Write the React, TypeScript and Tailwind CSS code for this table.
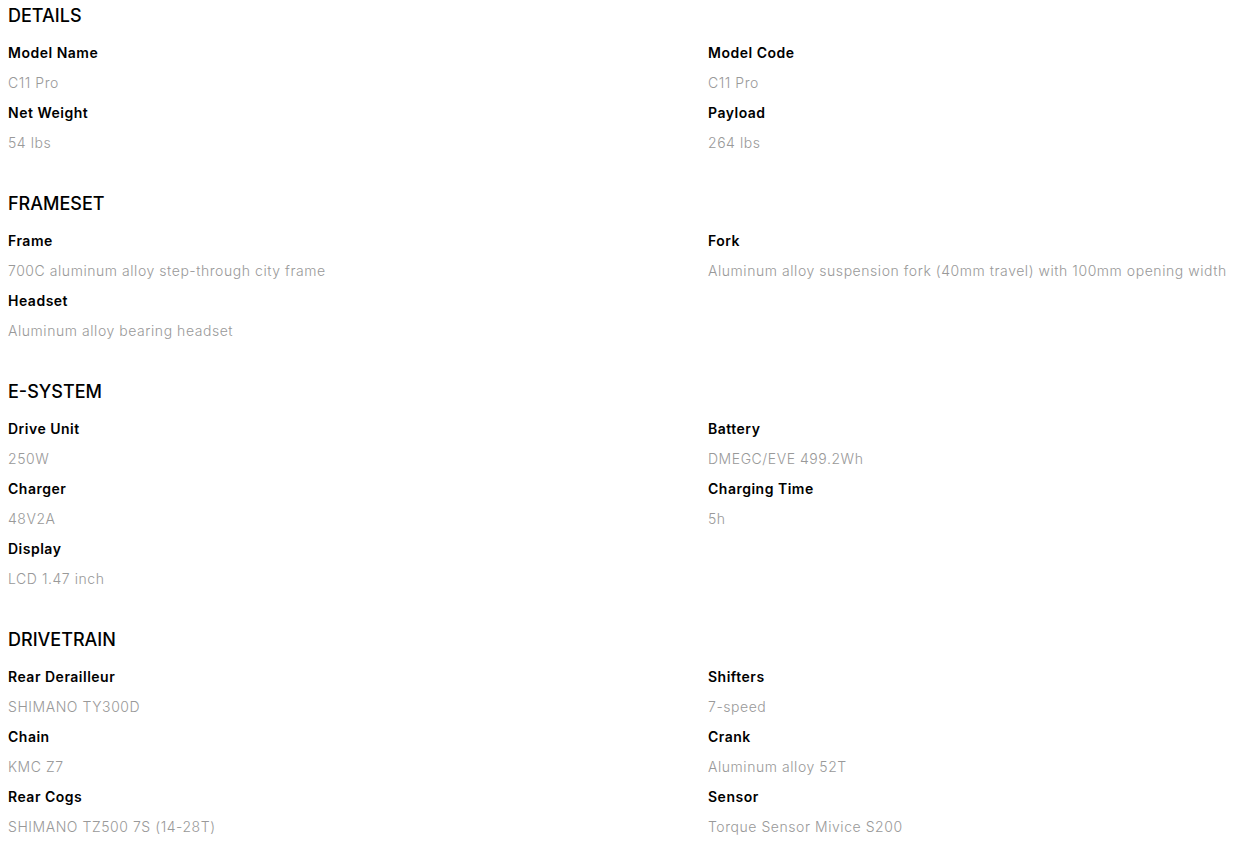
const sections: Array<{ title: string; items: Array<[string, string]> }> = [
  {
    title: "DETAILS",
    items: [
      ["Model Name", "C11 Pro"],
      ["Model Code", "C11 Pro"],
      ["Net Weight", "54 lbs"],
      ["Payload", "264 lbs"],
    ],
  },
  {
    title: "FRAMESET",
    items: [
      ["Frame", "700C aluminum alloy step-through city frame"],
      ["Fork", "Aluminum alloy suspension fork (40mm travel) with 100mm opening width"],
      ["Headset", "Aluminum alloy bearing headset"],
    ],
  },
  {
    title: "E-SYSTEM",
    items: [
      ["Drive Unit", "250W"],
      ["Battery", "DMEGC/EVE 499.2Wh"],
      ["Charger", "48V2A"],
      ["Charging Time", "5h"],
      ["Display", "LCD 1.47 inch"],
    ],
  },
  {
    title: "DRIVETRAIN",
    items: [
      ["Rear Derailleur", "SHIMANO TY300D"],
      ["Shifters", "7-speed"],
      ["Chain", "KMC Z7"],
      ["Crank", "Aluminum alloy 52T"],
      ["Rear Cogs", "SHIMANO TZ500 7S (14-28T)"],
      ["Sensor", "Torque Sensor Mivice S200"],
    ],
  },
];

export default function App() {
  return (
    <div className="bg-white px-2 font-['Inter',sans-serif] text-black">
      {sections.map((s) => (
        <section key={s.title} className="mb-[29.7px]">
          <h2 className="text-[18px] leading-[30px] font-medium pt-px mb-[7.3px]">{s.title}</h2>
          <div className="grid grid-cols-[700px_1fr]">
            {s.items.map(([label, value]) => (
              <div key={label}>
                <div className="text-[14px] leading-[30px] font-semibold tracking-[0.5px] whitespace-nowrap">{label}</div>
                <div className="text-[14px] leading-[30px] font-light tracking-[0.55px] text-[#999999] whitespace-nowrap">{value}</div>
              </div>
            ))}
          </div>
        </section>
      ))}
    </div>
  );
}
